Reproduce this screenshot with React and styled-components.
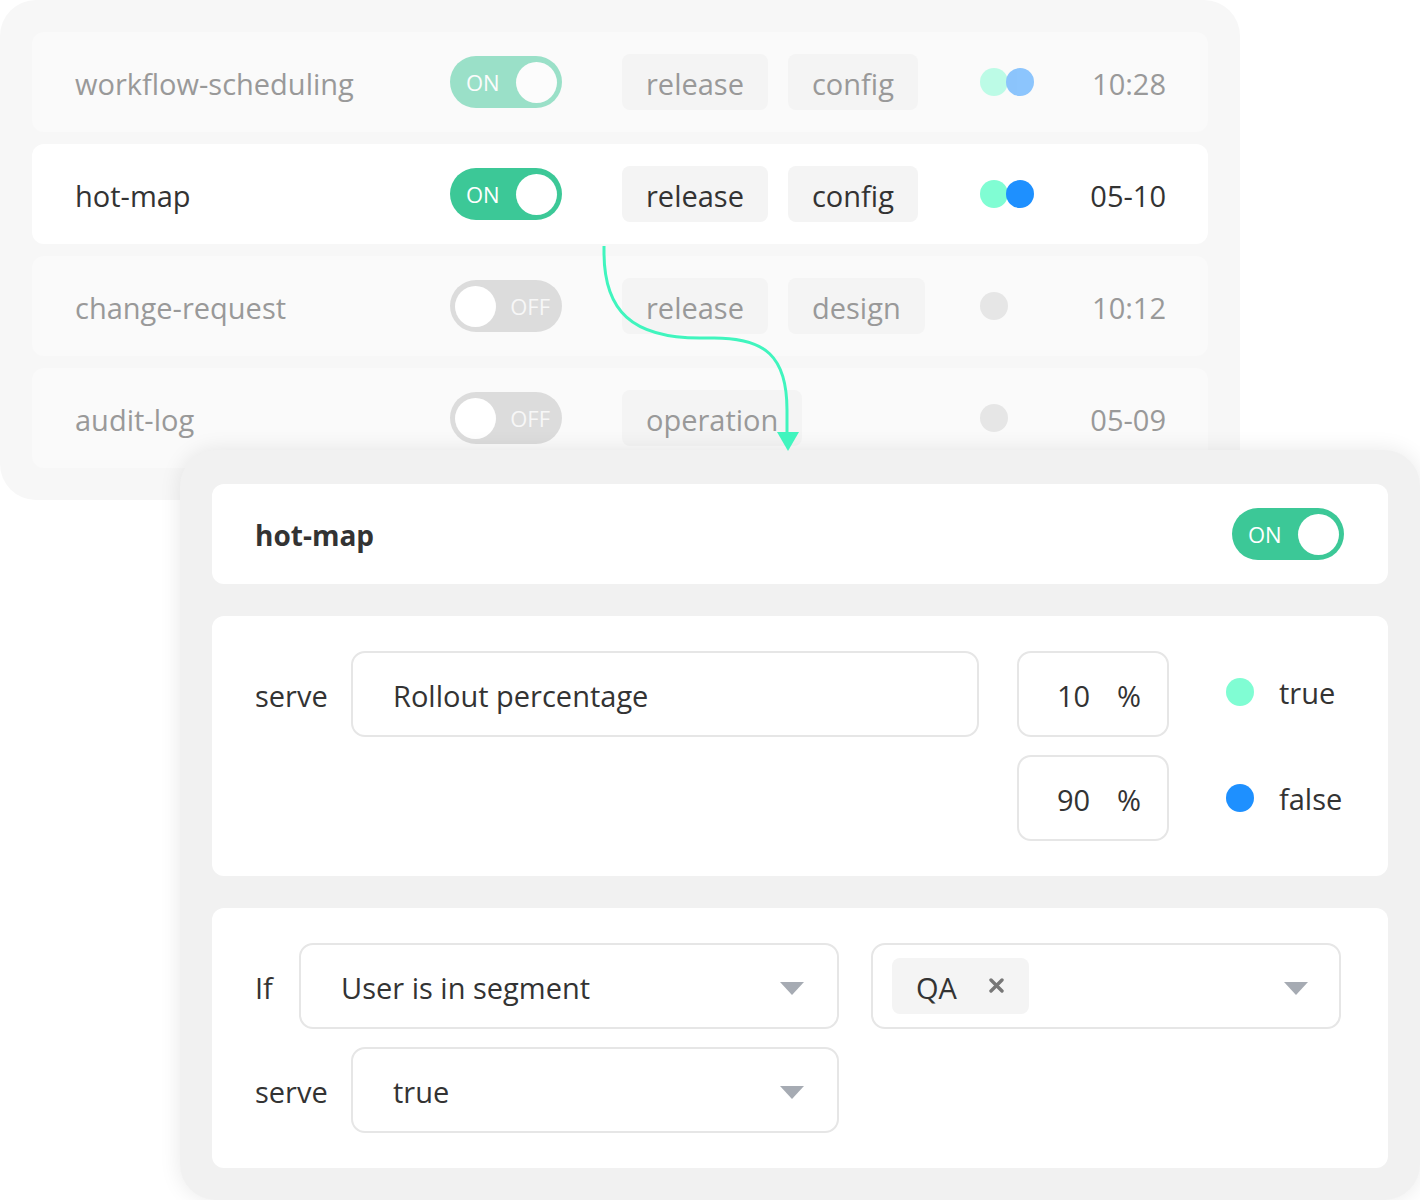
import React from 'react';
import styled, { createGlobalStyle } from 'styled-components';

const GlobalStyle = createGlobalStyle`
  body {
    margin: 0;
    background: #ffffff;
    font-family: "Open Sans", "Noto Sans", sans-serif;
    color: #333;
  }
  * { box-sizing: border-box; }
`;

const Stage = styled.div`
  position: relative;
  width: 1420px;
  height: 1200px;
  overflow: hidden;
`;

const BackCard = styled.section`
  width: 1240px;
  padding: 32px;
  background: #f7f7f7;
  border-radius: 36px;
  display: flex;
  flex-direction: column;
  gap: 12px;
`;

const Row = styled.div`
  height: 100px;
  border-radius: 12px;
  background: ${p => (p.$active ? '#ffffff' : '#fafafa')};
  color: ${p => (p.$active ? '#333' : '#999')};
  display: grid;
  grid-template-columns: 375px 172px 358px 1fr auto;
  align-items: center;
  padding: 0 42px 0 43px;
  font-size: 29px;
`;

const Name = styled.div`
  line-height: 1;
  padding-top: 3px;
`;

const Dim = styled.div`
  display: flex;
  opacity: ${p => (p.$dim ? 0.5 : 1)};
`;

const ToggleTrack = styled.div`
  width: 112px;
  height: 52px;
  border-radius: 26px;
  background: ${p => (p.$on ? '#3cc897' : '#dcdcdc')};
  display: flex;
  flex-direction: ${p => (p.$on ? 'row' : 'row-reverse')};
  align-items: center;
  justify-content: space-between;
  padding: 0 5px;
`;

const ToggleText = styled.span`
  font-size: 22px;
  line-height: 1;
  color: ${p => (p.$on ? '#ffffff' : '#f7f7f7')};
  padding: ${p => (p.$on ? '0 0 0 11px' : '0 7px 0 0')};
`;

const Knob = styled.span`
  width: 41px;
  height: 41px;
  border-radius: 50%;
  background: #ffffff;
`;

const Tags = styled.div`
  display: flex;
  gap: 20px;
`;

const Tag = styled.span`
  height: 56px;
  padding: 2px 24px 0;
  display: flex;
  align-items: center;
  background: #f4f4f4;
  border-radius: 8px;
  line-height: 1;
`;

const Dot = styled.span`
  width: 28px;
  height: 28px;
  border-radius: 50%;
  background: ${p => p.$color};
  & + & { margin-left: -2px; }
`;

const Time = styled.div`
  line-height: 1;
  padding-top: 3px;
`;

const DetailCard = styled.section`
  position: relative;
  z-index: 1;
  width: 1240px;
  height: 750px;
  margin: -50px 0 0 180px;
  padding: 34px 32px 32px;
  background: #f1f1f1;
  border-radius: 36px;
  box-shadow: 0 0 22px rgba(0, 0, 0, 0.09);
  display: flex;
  flex-direction: column;
  gap: 32px;
`;

const Panel = styled.div`
  background: #ffffff;
  border-radius: 12px;
  padding: 35px 43px;
`;

const HeaderPanel = styled(Panel)`
  height: 100px;
  padding: 0 44px 0 43px;
  display: flex;
  align-items: center;
  justify-content: space-between;
`;

const Title = styled.h2`
  margin: 0;
  padding-top: 2px;
  font-size: 28px;
  font-weight: 700;
  color: #333;
`;

const Line = styled.div`
  display: flex;
  align-items: flex-start;
`;

const Label = styled.div`
  width: ${p => p.$w}px;
  height: 86px;
  display: flex;
  align-items: center;
  padding-top: 3px;
  font-size: 29px;
  color: #333;
  flex-shrink: 0;
`;

const Field = styled.div`
  width: ${p => p.$w}px;
  height: 86px;
  flex-shrink: 0;
  border: 2px solid #e6e6e6;
  border-radius: 14px;
  display: flex;
  align-items: center;
  justify-content: ${p => (p.$start ? 'flex-start' : 'space-between')};
  padding: ${p => p.$pad || '0 31px 0 40px'};
  font-size: 29px;
  color: #333;
  margin-left: ${p => p.$ml || 0}px;
`;

const FieldText = styled.span`
  padding-top: 3px;
`;

const Column = styled.div`
  display: flex;
  flex-direction: column;
  gap: 18px;
  margin-left: ${p => p.$ml}px;
`;

const Num = styled.span`
  width: 60px;
  padding-top: 3px;
`;

const LegendItem = styled.div`
  height: 86px;
  display: flex;
  align-items: center;
  gap: 25px;
  font-size: 29px;
  color: #333;
  padding-bottom: ${p => p.$up || 0}px;
`;

const Chip = styled.span`
  height: 56px;
  display: flex;
  align-items: center;
  gap: 32px;
  padding: 2px 25px 0 24px;
  background: #f4f4f4;
  border-radius: 8px;
`;

const Rules = styled.div`
  display: flex;
  flex-direction: column;
  gap: 18px;
`;

const Connector = styled.svg`
  position: absolute;
  left: 0;
  top: 0;
  z-index: 2;
  pointer-events: none;
`;

const Caret = () => (
  <svg width="24" height="13" viewBox="0 0 24 13" style={{ marginTop: 4 }}>
    <polygon points="0,0 24,0 12,13" fill="#a6abb3" />
  </svg>
);

const Close = () => (
  <svg width="15" height="15" viewBox="0 0 15 15" style={{ marginBottom: 4 }}>
    <path d="M2 2 L13 13 M13 2 L2 13" stroke="#777" strokeWidth="3.4" strokeLinecap="round" />
  </svg>
);

const Toggle = ({ on }) => (
  <ToggleTrack $on={on}>
    <ToggleText $on={on}>{on ? 'ON' : 'OFF'}</ToggleText>
    <Knob />
  </ToggleTrack>
);

const GREEN = '#80fdd3';
const BLUE = '#1e90ff';
const GRAY = '#e6e6e6';

const flags = [
  { name: 'workflow-scheduling', on: true, tags: ['release', 'config'], dots: [GREEN, BLUE], time: '10:28', dim: true },
  { name: 'hot-map', on: true, tags: ['release', 'config'], dots: [GREEN, BLUE], time: '05-10', active: true },
  { name: 'change-request', on: false, tags: ['release', 'design'], dots: [GRAY], time: '10:12' },
  { name: 'audit-log', on: false, tags: ['operation'], dots: [GRAY], time: '05-09' },
];

export default function App() {
  return (
    <Stage>
      <GlobalStyle />
      <BackCard>
        {flags.map(f => (
          <Row key={f.name} $active={f.active}>
            <Name>{f.name}</Name>
            <Dim $dim={f.dim}>
              <Toggle on={f.on} />
            </Dim>
            <Tags>
              {f.tags.map(t => (
                <Tag key={t}>{t}</Tag>
              ))}
            </Tags>
            <Dim $dim={f.dim}>
              {f.dots.map((c, i) => (
                <Dot key={i} $color={c} />
              ))}
            </Dim>
            <Time>{f.time}</Time>
          </Row>
        ))}
      </BackCard>

      <Connector width="1420" height="1200" viewBox="0 0 1420 1200">
        <path
          d="M604 246 V 252 C 604 311, 632 338, 700 338 H 714 C 765 338, 787 356, 787 410 V 434"
          fill="none"
          stroke="#40f5be"
          strokeWidth="3"
        />
        <polygon points="777,432 799,432 788,451" fill="#40f5be" />
      </Connector>

      <DetailCard>
        <HeaderPanel>
          <Title>hot-map</Title>
          <Toggle on />
        </HeaderPanel>

        <Panel>
          <Line>
            <Label $w={96}>serve</Label>
            <Field $w={628}>
              <FieldText>Rollout percentage</FieldText>
            </Field>
            <Column $ml={38}>
              <Field $w={152} $pad="0 0 0 38px" $start>
                <Num>10</Num>
                <FieldText>%</FieldText>
              </Field>
              <Field $w={152} $pad="0 0 0 38px" $start>
                <Num>90</Num>
                <FieldText>%</FieldText>
              </Field>
            </Column>
            <Column $ml={57}>
              <LegendItem $up={4}>
                <Dot $color={GREEN} />
                true
              </LegendItem>
              <LegendItem>
                <Dot $color={BLUE} />
                false
              </LegendItem>
            </Column>
          </Line>
        </Panel>

        <Panel>
          <Rules>
            <Line>
              <Label $w={44}>If</Label>
              <Field $w={540} $pad="0 33px 0 40px">
                <FieldText>User is in segment</FieldText>
                <Caret />
              </Field>
              <Field $w={470} $ml={32} $pad="0 31px 0 19px">
                <Chip>
                  QA
                  <Close />
                </Chip>
                <Caret />
              </Field>
            </Line>
            <Line>
              <Label $w={96}>serve</Label>
              <Field $w={488} $pad="0 33px 0 40px">
                <FieldText>true</FieldText>
                <Caret />
              </Field>
            </Line>
          </Rules>
        </Panel>
      </DetailCard>
    </Stage>
  );
}
